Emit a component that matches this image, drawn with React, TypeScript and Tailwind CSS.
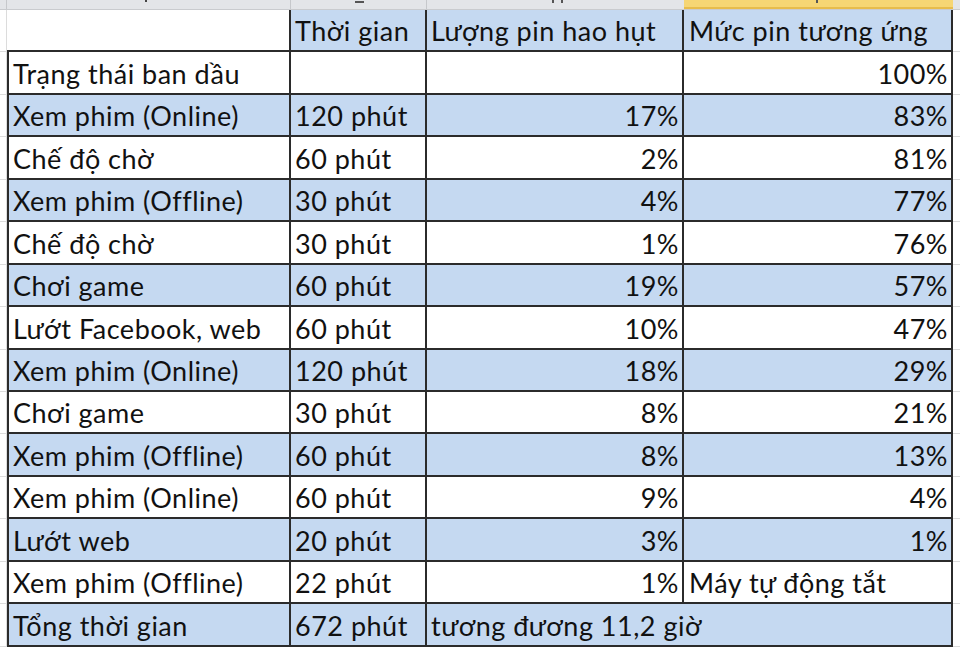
import React from 'react'

type Row = {
  label: string
  time: string
  drain: string
  level: string
  levelText?: boolean
}

const rows: Row[] = [
  { label: 'Trạng thái ban dầu', time: '', drain: '', level: '100%' },
  { label: 'Xem phim (Online)', time: '120 phút', drain: '17%', level: '83%' },
  { label: 'Chế độ chờ', time: '60 phút', drain: '2%', level: '81%' },
  { label: 'Xem phim (Offline)', time: '30 phút', drain: '4%', level: '77%' },
  { label: 'Chế độ chờ', time: '30 phút', drain: '1%', level: '76%' },
  { label: 'Chơi game', time: '60 phút', drain: '19%', level: '57%' },
  { label: 'Lướt Facebook, web', time: '60 phút', drain: '10%', level: '47%' },
  { label: 'Xem phim (Online)', time: '120 phút', drain: '18%', level: '29%' },
  { label: 'Chơi game', time: '30 phút', drain: '8%', level: '21%' },
  { label: 'Xem phim (Offline)', time: '60 phút', drain: '8%', level: '13%' },
  { label: 'Xem phim (Online)', time: '60 phút', drain: '9%', level: '4%' },
  { label: 'Lướt web', time: '20 phút', drain: '3%', level: '1%' },
  { label: 'Xem phim (Offline)', time: '22 phút', drain: '1%', level: 'Máy tự động tắt', levelText: true },
]

const cell = 'flex items-end pb-[6px] border-r-2 border-b-2 border-[#2b2b2b] overflow-hidden whitespace-nowrap'

export default function App() {
  return (
    <div
      className="w-[960px] h-[649px] bg-white overflow-hidden text-[#111] text-[27px] leading-none tracking-[0.5px]"
      style={{ fontFamily: 'Lato, "Noto Sans", sans-serif' }}
    >
      {/* sheet column header strip */}
      <div className="relative h-[10px] bg-[#e3e5e8] border-b border-[#c9cbce] flex">
        <div className="w-[7px] border-r border-[#c6c8cb]" />
        <div className="w-[284px] border-r border-[#c6c8cb]" />
        <div className="w-[136px] border-r border-[#c6c8cb]" />
        <div className="w-[257px]" />
        <div className="w-[269px] bg-[#f6d674] border-b-2 border-[#e7bc4c]" />
        <div className="flex-1" />
        <span className="absolute left-[145px] top-0 w-[2px] h-[2px] bg-[#444]" />
        <span className="absolute left-[355px] top-[1px] w-[9px] h-[2px] bg-[#555]" />
        <span className="absolute left-[552px] top-0 w-[2px] h-[3px] bg-[#555]" />
        <span className="absolute left-[561px] top-0 w-[2px] h-[3px] bg-[#555]" />
        <span className="absolute left-[816px] top-0 w-[2px] h-[3px] bg-[#555]" />
      </div>

      <div className="flex">
        <div className="w-[7px] flex flex-col">
          {Array.from({ length: 15 }).map((_, i) => (
            <div key={i} className="h-[42.45px] border-r border-b border-[#dcdcdc]" />
          ))}
        </div>

        <div className="grid grid-cols-[284px_136px_257px_269px] auto-rows-[42.45px]">
          {/* header row */}
          <div className="border-r-2 border-b-2 border-[#2b2b2b] bg-white" />
          <div className={`${cell} bg-[#c5d9f1] pl-[4px]`}>Thời gian</div>
          <div className={`${cell} bg-[#c5d9f1] pl-[4px]`}>Lượng pin hao hụt</div>
          <div className={`${cell} bg-[#c5d9f1] pl-[5px]`}>Mức pin tương ứng</div>

          {rows.map((r, i) => {
            const bg = i % 2 === 1 ? 'bg-[#c5d9f1]' : 'bg-white'
            return (
              <React.Fragment key={i}>
                <div className={`${cell} ${bg} border-l-2 pl-[4px]`}>{r.label}</div>
                <div className={`${cell} ${bg} pl-[4px]`}>{r.time}</div>
                <div className={`${cell} ${bg} justify-end pr-[3px]`}>{r.drain}</div>
                <div className={`${cell} ${bg} ${r.levelText ? 'pl-[5px]' : 'justify-end pr-[3px]'}`}>
                  {r.level}
                </div>
              </React.Fragment>
            )
          })}

          {/* total row */}
          <div className={`${cell} bg-[#c5d9f1] border-l-2 pl-[4px]`}>Tổng thời gian</div>
          <div className={`${cell} bg-[#c5d9f1] pl-[4px]`}>672 phút</div>
          <div className={`${cell} col-span-2 bg-[#c5d9f1] pl-[4px]`}>tương đương 11,2 giờ</div>
        </div>

        <div className="flex-1 flex flex-col">
          {Array.from({ length: 15 }).map((_, i) => (
            <div key={i} className="h-[42.45px] border-b border-[#dcdcdc]" />
          ))}
        </div>
      </div>
    </div>
  )
}
